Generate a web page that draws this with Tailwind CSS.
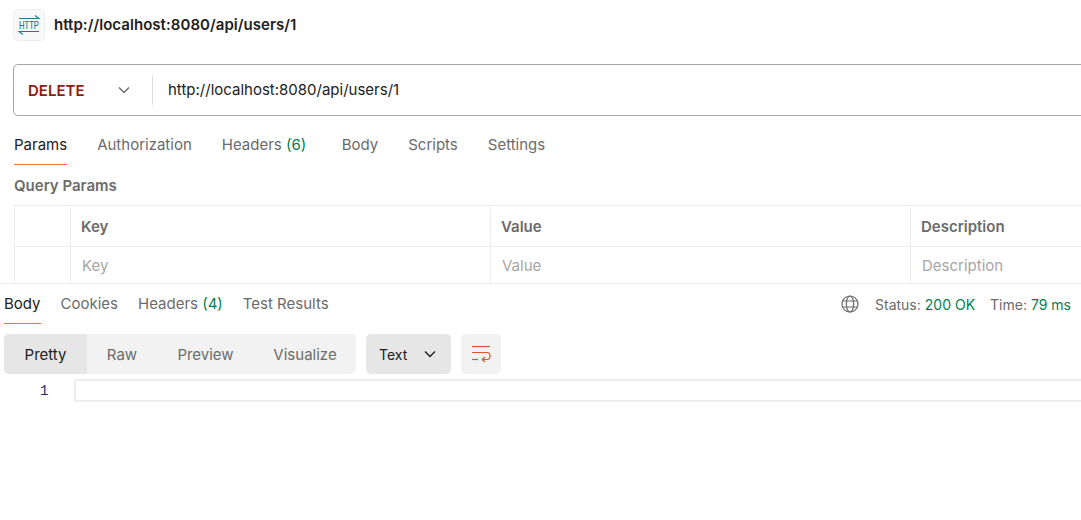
<!DOCTYPE html>
<html lang="en">
  <head>
    <meta charset="UTF-8" />
    <meta name="viewport" content="width=device-width, initial-scale=1.0" />
    <title>Request</title>
    <script src="https://cdn.jsdelivr.net/npm/@tailwindcss/browser@4"></script>
  </head>
  <body class="bg-white h-[520px] w-[1081px] overflow-hidden font-['Inter',sans-serif] text-[15px] text-[#6b6b6b]">
    <!-- Request title -->
    <div class="h-[64px] pl-[13px] pt-[9px] flex items-start gap-[9px]">
      <div class="w-[32px] h-[32px] rounded-[5px] border border-[#ededed] bg-[#f9f9f9] flex items-center justify-center">
        <svg width="24" height="24" viewBox="0 0 24 24" fill="none" stroke="#17808c" stroke-width="1.1">
          <path d="M2 5.5H22L18 2.5" />
          <path d="M22 18.5H2L6 21.5" />
          <text transform="translate(12 16) scale(0.95 1.28)" text-anchor="middle" fill="#17808c" stroke="#17808c" stroke-width="0.15" font-family="Liberation Sans" font-size="8">HTTP</text>
        </svg>
      </div>
      <span class="font-semibold text-[#212121] leading-[32px] tracking-[0.05px]">http://localhost:8080/api/users/1</span>
    </div>

    <!-- URL bar -->
    <div class="ml-[13px] w-[1090px] h-[52px] border border-[#a6a6a6] rounded-[5px] flex items-center">
      <div class="w-[138px] pl-[14px] pr-[21px] flex items-center justify-between">
        <span class="font-semibold text-[#8e1a10] mt-[2px]">DELETE</span>
        <svg width="14" height="14" viewBox="0 0 14 14" fill="none" stroke="#6b6b6b" stroke-width="1.4"><path d="M2 4.5L7 9.5L12 4.5" /></svg>
      </div>
      <div class="w-px h-[30px] bg-[#e0e0e0]"></div>
      <span class="pl-[15px] text-[#212121]">http://localhost:8080/api/users/1</span>
    </div>

    <!-- Request tabs -->
    <div class="ml-[14px] mt-[13px] h-[36px] flex gap-[30px]">
      <div class="h-[36px] leading-[31px] text-[#212121] border-b border-[#f26b3a]">Params</div>
      <div class="leading-[31px]">Authorization</div>
      <div class="leading-[31px]">Headers <span class="text-[#007f50]">(6)</span></div>
      <div class="leading-[31px] ml-[5.5px]">Body</div>
      <div class="leading-[31px]">Scripts</div>
      <div class="leading-[31px]">Settings</div>
    </div>

    <div class="ml-[14px] mt-[4px] h-[36px] leading-[33px] font-semibold">Query Params</div>

    <!-- Params table -->
    <div class="ml-[14px] w-[1090px] h-[78px] overflow-hidden border-t border-l border-[#ededed]">
      <div class="flex h-[41px] border-b border-[#ededed] font-semibold">
        <div class="w-[56px] border-r border-[#ededed]"></div>
        <div class="w-[420px] border-r border-[#ededed] pl-[10px] leading-[42px]">Key</div>
        <div class="w-[420px] border-r border-[#ededed] pl-[10px] leading-[42px]">Value</div>
        <div class="pl-[10px] leading-[42px]">Description</div>
      </div>
      <div class="flex h-[37px] text-[#a6a6a6]">
        <div class="w-[56px] border-r border-[#ededed]"></div>
        <div class="w-[420px] border-r border-[#ededed] pl-[11px] leading-[38px]">Key</div>
        <div class="w-[420px] border-r border-[#ededed] pl-[11px] leading-[38px]">Value</div>
        <div class="pl-[11px] leading-[38px]">Description</div>
      </div>
    </div>

    <!-- Response pane -->
    <div class="border-t border-[#ededed] pl-[4px]">
      <div class="h-[40px] flex items-start justify-between pr-[10px]">
        <div class="flex gap-[20px]">
          <div class="h-[40px] leading-[40px] text-[#212121] border-b border-[#f26b3a]">Body</div>
          <div class="leading-[40px]">Cookies</div>
          <div class="leading-[40px]">Headers <span class="text-[#007f50]">(4)</span></div>
          <div class="leading-[40px]">Test Results</div>
        </div>
        <div class="flex items-center h-[40px] text-[14px]">
          <svg class="mr-[15px]" width="20" height="20" viewBox="0 0 20 20" fill="none" stroke="#6b6b6b" stroke-width="1.2">
            <circle cx="10" cy="10" r="8" />
            <ellipse cx="10" cy="10" rx="3.6" ry="8" />
            <path d="M2.6 7H17.4M2.6 13H17.4" />
          </svg>
          <span>Status:</span>
          <span class="ml-[4px] text-[#007f50]">200 OK</span>
          <span class="ml-[15px]">Time:</span>
          <span class="ml-[4px] text-[#007f50]">79 ms</span>
        </div>
      </div>

      <!-- Format controls -->
      <div class="mt-[10px] flex gap-[10px]">
        <div class="h-[40px] w-[352px] rounded-[5px] bg-[#f2f2f2] flex leading-[41px]">
          <div class="w-[83px] rounded-l-[5px] bg-[#e6e6e6] text-[#212121] text-center">Pretty</div>
          <div class="w-[70px] text-center">Raw</div>
          <div class="w-[97px] text-center">Preview</div>
          <div class="w-[102px] text-center">Visualize</div>
        </div>
        <div class="h-[40px] w-[85px] rounded-[5px] bg-[#e6e6e6] flex items-center justify-between pl-[13px] pr-[15px] text-[14px] text-[#212121]">
          <span>Text</span>
          <svg width="12" height="12" viewBox="0 0 12 12" fill="none" stroke="#212121" stroke-width="1.4"><path d="M1 3.5L6 8.5L11 3.5" /></svg>
        </div>
        <div class="h-[40px] w-[40px] rounded-[5px] bg-[#f2f2f2] flex items-center justify-center">
          <svg width="20" height="20" viewBox="0 0 20 20" fill="none" stroke="#d4562f" stroke-width="1.2">
            <path d="M1 2.5H19" />
            <path d="M1 8.5H16C18 8.5 19 10 19 12C19 14 18 15.5 16 15.5H11M11 15.5L14 13M11 15.5L14 18" />
            <path d="M1 15.5H7" />
          </svg>
        </div>
      </div>

      <!-- Response body -->
      <div class="mt-[5px] flex">
        <div class="w-[44px] shrink-0 pl-[36px] font-['Liberation_Mono',monospace] text-[#1a2a6c] text-[14px] leading-[24px]">1</div>
        <div class="ml-[26px] w-[1040px] shrink-0 h-[23px] border-2 border-[#ededed]"></div>
      </div>
    </div>
  </body>
</html>
